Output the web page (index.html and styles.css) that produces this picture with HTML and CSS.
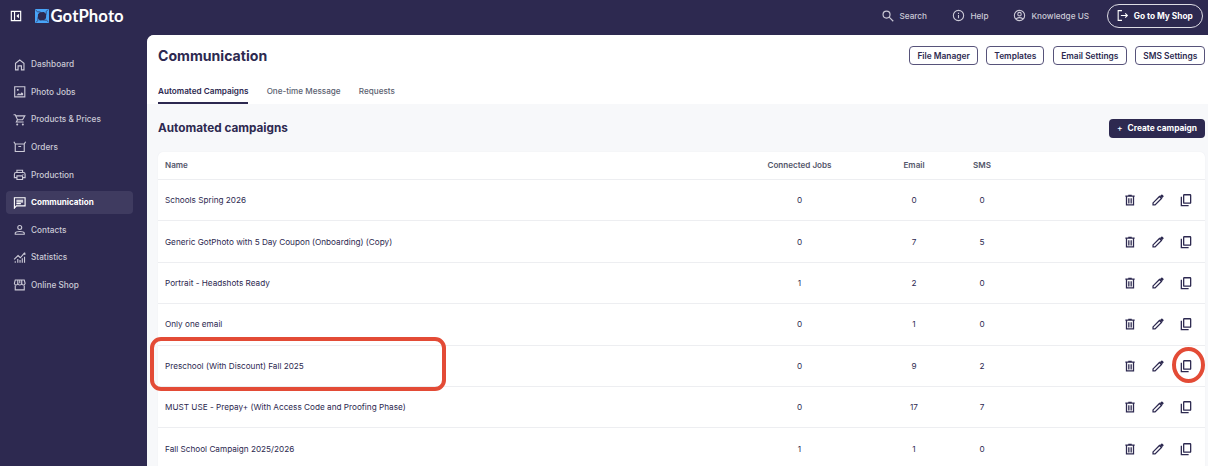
FILE: index.html
```html
<!DOCTYPE html>
<html lang="en">
<head>
<meta charset="utf-8">
<title>GotPhoto – Communication</title>
<link rel="stylesheet" href="styles.css">
</head>
<body>
<svg class="sprite" aria-hidden="true">
  <symbol id="trash" viewBox="0 0 24 24"><path d="M4 5.2h16M9 4h6M6 5.500V20.500h12V5.500M10 9v9M14 9v9"/></symbol>
  <symbol id="pencil" viewBox="0 0 24 24"><path d="M3.500 20.500v-3.500L14.500 6l3.500 3.500L7 20.500z"/><path class="solid" d="M15 5.500l2.600-2.600q1-.8 2 0l1.700 1.800q.8 1 0 1.900l-2.500 2.600z"/></symbol>
  <symbol id="copy" viewBox="0 0 24 24"><rect x="8" y="3" width="12" height="14.500" rx="1"/><path d="M4 6.500V21.500h12.500"/></symbol>
</svg>
<header class="topbar">
  <svg class="icon collapse" viewBox="0 0 24 24"><path d="M4 4h16v16H4zM9.500 4v16"/><path class="solid" d="M17 8v8L12.500 12z"/></svg>
  <div class="brand">
    <svg class="brand-mark" viewBox="0 0 28 28"><rect class="blade" width="28" height="28" rx="1"/><path class="lens" d="M10 6.500l8-.5 4.500 4.500-.5 8-4.500 4-8 .5L5.500 18l.5-7.500z"/><path class="cut" d="M1 2Q4 7 11 6M26 1q-5 3-4 10M27 26q-3-5-10-4M2 27q5-3 4-10"/></svg>
    <span class="brand-name">GotPhoto</span>
  </div>
  <a class="top-link search"><svg class="icon" viewBox="0 0 24 24"><circle cx="9.500" cy="9.500" r="6"/><path d="M14 14l7 7"/></svg><span>Search</span></a>
  <a class="top-link help"><svg class="icon" viewBox="0 0 24 24"><circle cx="12" cy="12" r="9.500"/><path d="M12 11v6M12 7v2"/></svg><span>Help</span></a>
  <a class="top-link account"><svg class="icon" viewBox="0 0 24 24"><circle cx="12" cy="12" r="9.500"/><circle cx="12" cy="9.500" r="3.200"/><path d="M5.500 18.500q6.500-5 13 0"/></svg><span>Knowledge US</span></a>
  <a class="shop"><svg class="icon" viewBox="0 0 24 24"><path d="M11 3H4v18h7M9 12h12M17 8l4 4-4 4"/></svg><span>Go to My Shop</span></a>
</header>
<div class="shell">
  <nav class="sidebar">
    <a class="nav-item"><svg class="icon" viewBox="0 0 24 24"><path d="M4.500 21V9.500L12 3.500l7.500 6V21H15v-7H9v7z"/></svg><span>Dashboard</span></a>
    <a class="nav-item"><svg class="icon" viewBox="0 0 24 24"><path d="M3 3h18v18H3z"/><path class="solid" d="M6 18h12v-3l-2.500-2-2.500 3-3-1.500zM7 7h3v3H7z"/></svg><span>Photo Jobs</span></a>
    <a class="nav-item"><svg class="icon" viewBox="0 0 24 24"><path d="M1 3h3l4 9h9l4-7H5.500M8 12l-2 4h13"/><circle class="solid" cx="7.500" cy="20.500" r="1.800"/><circle class="solid" cx="17.500" cy="20.500" r="1.800"/></svg><span>Products &amp; Prices</span></a>
    <a class="nav-item"><svg class="icon" viewBox="0 0 24 24"><path d="M1.500 3L4 7v13.500h16V7l2.500-4M4 7h16M9.500 11.500h5"/></svg><span>Orders</span></a>
    <a class="nav-item"><svg class="icon" viewBox="0 0 24 24"><path d="M7 8V4h10v4M7 17H2.500v-6q0-3 3-3h13q3 0 3 3v6H17M7 14h10v6.500H7z"/><path d="M17 11.500h1.500"/></svg><span>Production</span></a>
    <a class="nav-item active"><svg class="icon" viewBox="0 0 24 24"><path d="M2.500 21.500V3h19v14.500H6zM6 7.500h12M6 10.500h12M6 13.500h8"/></svg><span>Communication</span></a>
    <a class="nav-item"><svg class="icon" viewBox="0 0 24 24"><circle cx="12" cy="8" r="3.500"/><path d="M4 20v-2.500q1-2.500 8-2.500t8 2.500V20z"/></svg><span>Contacts</span></a>
    <a class="nav-item"><svg class="icon" viewBox="0 0 24 24"><path d="M2 15l7-7 4 4 8-9M21 3v4M4 18v3M8.500 14v7M12.500 16v5M16.500 13v8M20.500 10v11"/></svg><span>Statistics</span></a>
    <a class="nav-item"><svg class="icon" viewBox="0 0 24 24"><path d="M4 12v9h16v-9M4 3.500h16l1.500 6q-.5 3-3 3t-3-3q-.5 3-3.500 3t-3.500-3q-.5 3-3 3t-3-3zM8.500 9.500v-6M12 9.500v-6M15.500 9.500v-6"/></svg><span>Online Shop</span></a>
  </nav>
  <main class="content">
    <section class="page-head">
      <div class="title-row">
        <h1>Communication</h1>
        <div class="actions">
          <button class="btn file">File Manager</button><button class="btn templates">Templates</button><button class="btn email">Email Settings</button><button class="btn sms">SMS Settings</button>
        </div>
      </div>
      <div class="tabs"><a class="tab selected">Automated Campaigns</a><a class="tab">One-time Message</a><a class="tab">Requests</a></div>
    </section>
    <section class="campaigns">
      <div class="section-head"><h2>Automated campaigns</h2><button class="create"><span class="plus">+</span><span>Create campaign</span></button></div>
      <div class="table">
        <div class="row head"><span>Name</span><span class="num">Connected Jobs</span><span class="num">Email</span><span class="num">SMS</span></div>
        <div class="row"><span>Schools Spring 2026</span><span class="num">0</span><span class="num">0</span><span class="num">0</span><span class="tools"><svg><use href="#trash"/></svg><svg><use href="#pencil"/></svg><svg><use href="#copy"/></svg></span></div>
        <div class="row"><span>Generic GotPhoto with 5 Day Coupon (Onboarding) (Copy)</span><span class="num">0</span><span class="num">7</span><span class="num">5</span><span class="tools"><svg><use href="#trash"/></svg><svg><use href="#pencil"/></svg><svg><use href="#copy"/></svg></span></div>
        <div class="row"><span>Portrait - Headshots Ready</span><span class="num">1</span><span class="num">2</span><span class="num">0</span><span class="tools"><svg><use href="#trash"/></svg><svg><use href="#pencil"/></svg><svg><use href="#copy"/></svg></span></div>
        <div class="row"><span>Only one email</span><span class="num">0</span><span class="num">1</span><span class="num">0</span><span class="tools"><svg><use href="#trash"/></svg><svg><use href="#pencil"/></svg><svg><use href="#copy"/></svg></span></div>
        <div class="row marked"><span>Preschool (With Discount) Fall 2025</span><span class="num">0</span><span class="num">9</span><span class="num">2</span><span class="tools"><svg><use href="#trash"/></svg><svg><use href="#pencil"/></svg><svg><use href="#copy"/></svg></span><i class="mark-box"></i><i class="mark-ring"></i></div>
        <div class="row"><span>MUST USE - Prepay+ (With Access Code and Proofing Phase)</span><span class="num">0</span><span class="num">17</span><span class="num">7</span><span class="tools"><svg><use href="#trash"/></svg><svg><use href="#pencil"/></svg><svg><use href="#copy"/></svg></span></div>
        <div class="row"><span>Fall School Campaign 2025/2026</span><span class="num">1</span><span class="num">1</span><span class="num">0</span><span class="tools"><svg><use href="#trash"/></svg><svg><use href="#pencil"/></svg><svg><use href="#copy"/></svg></span></div>
      </div>
    </section>
  </main>
</div>
</body>
</html>
```
FILE: styles.css
```css
* { box-sizing: border-box; }
body {
  margin: 0;
  height: 466px;
  overflow: hidden;
  background: #2d2950;
  color: #2d2950;
  font-family: Inter, "Liberation Sans", sans-serif;
  font-size: 8.2px;
  display: flex;
  flex-direction: column;
}
h1, h2 { margin: 0; font-weight: 700; }
button { font: inherit; padding: 0; margin: 0; white-space: nowrap; }
svg { fill: none; stroke: currentColor; stroke-width: 2; display: block; flex: none; }
.solid { fill: currentColor; stroke: none; }
.sprite { position: absolute; width: 0; height: 0; }
.icon { width: 13px; height: 13px; }

.topbar {
  height: 34.5px;
  flex: none;
  display: flex;
  align-items: center;
  padding: 0 5px 3px 9px;
  color: #cbc9d6;
  font-weight: 500;
  white-space: nowrap;
}
.collapse { width: 14px; height: 14px; color: #fff; }
.brand { display: flex; align-items: center; gap: 2px; margin-left: 11.500px; color: #fff; }
.brand-mark { width: 14px; height: 14px; }
.blade { fill: #48a4f8; stroke: none; }
.lens { fill: #2d2950; stroke: none; }
.cut { stroke: #2d2950; stroke-width: 1.400; }
.brand-name { font: 700 16.700px/20px Lato, sans-serif; letter-spacing: 0.1px; }
.top-link { display: flex; align-items: center; gap: 5px; }
.search { margin-left: auto; }
.search .icon { width: 14px; height: 14px; }
.search { gap: 4px; }
.help { margin-left: 25.500px; }
.account { margin-left: 25px; }
.shop {
  margin-left: 18px;
  width: 96px;
  height: 24px;
  border: 1px solid #dddce4;
  border-radius: 12px;
  display: flex;
  align-items: center;
  justify-content: center;
  gap: 4.500px;
  padding-right: 1px;
  color: #fff;
  font-size: 8.300px;
  font-weight: 700;
}
.shell { flex: 1; display: flex; min-height: 0; }
.sidebar { width: 146.500px; flex: none; padding: 18.300px 13.500px 0 6px; }
.nav-item {
  height: 23px;
  margin-bottom: 4.600px;
  padding-left: 7px;
  border-radius: 4px;
  display: flex;
  align-items: center;
  gap: 4.500px;
  color: #cbc9d6;
  font-weight: 500;
  font-size: 8.250px;
}
.nav-item .icon { width: 13.500px; height: 13.500px; }
.nav-item.active { background: #3f3b60; color: #fff; font-weight: 700; font-size: 8.100px; }

.content { flex: 1; background: #f7f8fa; border-top-left-radius: 7px; overflow: hidden; }
.page-head { background: #fff; height: 69.500px; padding: 9px 2.700px 0 11.500px; }
.title-row { height: 24px; display: flex; align-items: center; justify-content: space-between; }
h1 { font-size: 14.100px; }
.actions { display: flex; gap: 8.500px; }
.btn {
  height: 19.500px;
  border: 1px solid #57537a;
  border-radius: 4px;
  background: #fff;
  color: #2d2950;
  font-weight: 600;
  font-size: 8.400px;
}
.file { width: 68.500px; }
.templates { width: 58px; }
.email { width: 74px; }
.sms { width: 70px; }
.tabs { height: 36.500px; display: flex; gap: 18.200px; color: #5b5f70; font-weight: 500; }
.tab { padding-top: 18px; line-height: 10px; font-size: 8.150px; }
.tab.selected { color: #2d2950; font-size: 8.200px; font-weight: 600; border-bottom: 2px solid #2d2950; }

.campaigns { padding: 0 3px 0 11.500px; }
.section-head { height: 48px; display: flex; align-items: center; justify-content: space-between; }
h2 { font-size: 11.750px; }
.create {
  width: 96px;
  height: 19px;
  border: 0;
  border-radius: 4px;
  background: #2d2950;
  color: #fff;
  font-size: 8.350px;
  font-weight: 700;
  display: flex;
  align-items: center;
  justify-content: center;
  gap: 5px;
}
.plus { font-weight: 500; }
.table { background: #fff; border-radius: 5px 5px 0 0; box-shadow: 0 0 1px #e3e5ea; }
.row {
  position: relative;
  height: 41.400px;
  padding-left: 7px;
  border-bottom: 1px solid #edeef1;
  display: grid;
  grid-template-columns: 576.500px 116px 113px 23px 1fr;
  align-items: center;
}
.row.head { height: 28px; padding-bottom: 1px; color: #53566a; font-size: 8.100px; font-weight: 600; }
.num { display: flex; justify-content: center; white-space: nowrap; }
.tools { display: flex; gap: 13.800px; justify-content: flex-end; padding-right: 12px; }
.tools svg { width: 14px; height: 14px; stroke-width: 2.200; }

.mark-box {
  position: absolute;
  left: -8px;
  top: -8.500px;
  width: 296px;
  height: 54px;
  border: 4px solid #e34b36;
  border-radius: 11px;
}
.mark-ring {
  position: absolute;
  right: 0.500px;
  top: 1.500px;
  width: 33px;
  height: 36px;
  border: 4px solid #e34b36;
  border-radius: 50%;
}
```
